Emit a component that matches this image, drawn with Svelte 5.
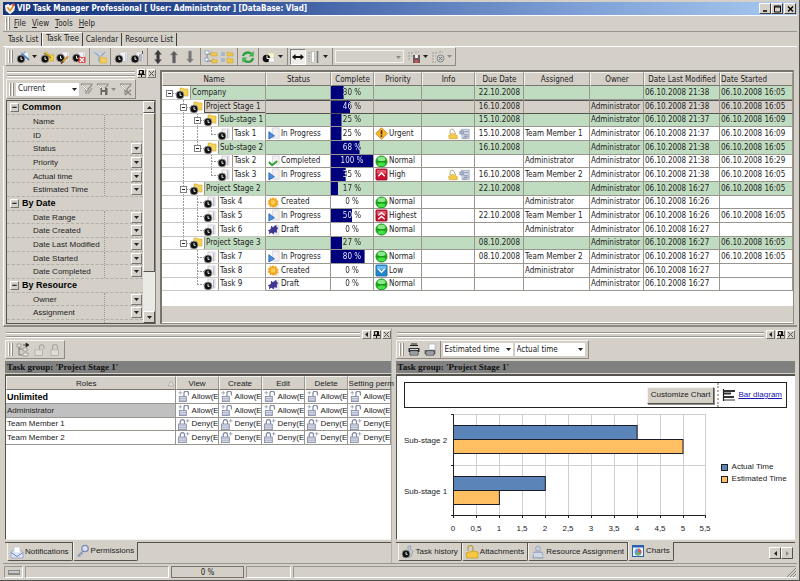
<script>
  let mainTab = $state('Task Tree')
  let leftTab = $state('Permissions')
  let rightTab = $state('Charts')

  const mainTabs = ['Task List', 'Task Tree', 'Calendar', 'Resource List']
  const menus = ['File', 'View', 'Tools', 'Help']

  const toolbar = [
    { icon: 'new', label: 'New task', drop: true },
    { icon: 'newgroup', label: 'New group' },
    { icon: 'edit', label: 'Edit task' },
    { icon: 'delete', label: 'Delete task' },
    null,
    { icon: 'filter', label: 'Filter' },
    null,
    { icon: 'clocksheet', label: 'Copy task' },
    { icon: 'clockpaste', label: 'Paste task' },
    null,
    { icon: 'updown', label: 'Move' },
    { icon: 'up', label: 'Move up' },
    { icon: 'down', label: 'Move down' },
    null,
    { icon: 'expand', label: 'Expand all' },
    { icon: 'groups', label: 'Collapse all' },
    null,
    { icon: 'refresh', label: 'Refresh' },
    null,
    { icon: 'clocknote', label: 'Reminder', drop: true },
    null,
    { icon: 'fit', label: 'Fit columns', pressed: true },
    { icon: 'columns', label: 'Columns', drop: true },
    null
  ]

  const filters = [
    { group: 'Common', items: ['Name', 'ID', 'Status', 'Priority', 'Actual time', 'Estimated Time'] },
    { group: 'By Date', items: ['Date Range', 'Date Created', 'Date Last Modified', 'Date Started', 'Date Completed'] },
    { group: 'By Resource', items: ['Owner', 'Assignment'] }
  ]
  const plain = ['Name', 'ID']

  const columns = ['Name', 'Status', 'Complete', 'Priority', 'Info', 'Due Date', 'Assigned', 'Owner', 'Date Last Modified', 'Date Started']

  const A = 'Administrator'
  // through: tree levels whose vertical line runs past the row
  const rows = [
    { name: 'Company', level: 0, group: true, through: [], done: 30, due: '22.10.2008', modified: '06.10.2008 21:38', started: '06.10.2008 16:05' },
    { name: 'Project Stage 1', level: 1, group: true, selected: true, through: [1], done: 46, due: '16.10.2008', owner: A, modified: '06.10.2008 21:38', started: '06.10.2008 16:05' },
    { name: 'Sub-stage 1', level: 2, group: true, through: [1, 2], done: 25, due: '15.10.2008', owner: A, modified: '06.10.2008 21:37', started: '06.10.2008 16:09' },
    { name: 'Task 1', level: 3, through: [1, 2], status: 'In Progress', done: 25, priority: 'Urgent', info: true, due: '15.10.2008', assigned: 'Team Member 1', owner: A, modified: '06.10.2008 21:37', started: '06.10.2008 16:09' },
    { name: 'Sub-stage 2', level: 2, group: true, through: [1], done: 68, due: '16.10.2008', owner: A, modified: '06.10.2008 21:38', started: '06.10.2008 16:05' },
    { name: 'Task 2', level: 3, through: [1, 3], status: 'Completed', done: 100, priority: 'Normal', assigned: A, owner: A, modified: '06.10.2008 21:38', started: '06.10.2008 16:29' },
    { name: 'Task 3', level: 3, through: [1], status: 'In Progress', done: 35, priority: 'High', info: true, due: '16.10.2008', assigned: 'Team Member 2', owner: A, modified: '06.10.2008 21:38', started: '06.10.2008 16:05' },
    { name: 'Project Stage 2', level: 1, group: true, through: [1], done: 17, due: '22.10.2008', owner: A, modified: '06.10.2008 16:27', started: '06.10.2008 16:05' },
    { name: 'Task 4', level: 2, through: [1, 2], status: 'Created', done: 0, priority: 'Normal', assigned: A, owner: A, modified: '06.10.2008 16:26' },
    { name: 'Task 5', level: 2, through: [1, 2], status: 'In Progress', done: 50, priority: 'Highest', due: '22.10.2008', assigned: 'Team Member 1', owner: A, modified: '06.10.2008 16:26', started: '06.10.2008 16:05' },
    { name: 'Task 6', level: 2, through: [1], status: 'Draft', done: 0, priority: 'Normal', assigned: A, owner: A, modified: '06.10.2008 16:27' },
    { name: 'Project Stage 3', level: 1, group: true, through: [], done: 27, due: '08.10.2008', owner: A, modified: '06.10.2008 16:27', started: '06.10.2008 16:05' },
    { name: 'Task 7', level: 2, through: [2], status: 'In Progress', done: 80, priority: 'Normal', due: '08.10.2008', assigned: 'Team Member 2', owner: A, modified: '06.10.2008 16:27', started: '06.10.2008 16:05' },
    { name: 'Task 8', level: 2, through: [2], status: 'Created', done: 0, priority: 'Low', assigned: A, owner: A, modified: '06.10.2008 16:27' },
    { name: 'Task 9', level: 2, through: [], status: 'Draft', done: 0, priority: 'Normal', owner: A, modified: '06.10.2008 16:27' }
  ]

  const rights = ['View', 'Create', 'Edit', 'Delete', 'Setting perm']
  const roles = [
    { name: 'Unlimited', allow: true, bold: true },
    { name: 'Administrator', allow: true, active: true },
    { name: 'Team Member 1', allow: false },
    { name: 'Team Member 2', allow: false }
  ]

  const ticks = ['0', '0,5', '1', '1,5', '2', '2,5', '3', '3,5', '4', '4,5', '5', '5,5']
  const tickX = (i) => 56 + Math.round(i * 22.95)
  const series = [
    { label: 'Sub-stage 2', actual: 4, estimated: 5 },
    { label: 'Sub-stage 1', actual: 2, estimated: 1 }
  ]
</script>

{#snippet clock(x, y)}
  <circle cx={x} cy={y} r="4" fill="#111" stroke="#a5a5a5" stroke-width="0.8" />
  <path d="M{x} {y - 2.2}V{y + 0.4}H{x + 1.6}" stroke="#fff" stroke-width="0.9" fill="none" />
{/snippet}

{#snippet sheet()}
  <rect x="6" y="2" width="7.5" height="9.5" fill="#f2f2f4" stroke="#c2c2c8" stroke-width="0.7" />
  <path d="M11.5 3v8M13 4v7" stroke="#b9bcc6" stroke-width="0.7" />
{/snippet}

{#snippet icon(name)}
  <svg class="icon" viewBox="0 0 14 14" width="14" height="14" fill="none" aria-hidden="true">
    {#if name === 'new'}
      <rect x="6" y="3" width="6" height="7" fill="#f5f5f5" />
      {@render clock(5, 9)}
      <path d="M5.5 3.5L13 10" stroke="#4f81bd" stroke-width="1.8" /><path d="M5 3h3M9 1l-1 3" stroke="#8bb0dd" />
    {:else if name === 'newgroup'}
      <path d="M6 4h3l1 1h4v6H6z" fill="#f1cd4a" stroke="#c39b25" stroke-width="0.6" />
      {@render clock(5, 9)}
      <path d="M4 3l7 5" stroke="#9c7f20" stroke-width="1.5" /><path d="M5 2l3 1" stroke="#dfb93c" />
    {:else if name === 'edit'}
      {@render sheet()}{@render clock(4.5, 8)}
      <path d="M6 12.5l6-6" stroke="#d3902f" stroke-width="2.2" /><path d="M5 13.5l2-2" stroke="#513412" stroke-width="1.5" />
    {:else if name === 'delete'}
      {@render sheet()}{@render clock(4.5, 8)}
      <rect x="6.5" y="7" width="7" height="6" fill="#e04848" /><path d="M8 8l4 4M12 8l-4 4" stroke="#fff" stroke-width="1.2" />
    {:else if name === 'filter'}
      <path d="M1 2l5 4v6M12 2L8 6" stroke="#8ea9cf" stroke-width="1.4" /><path d="M1 2h10" stroke="#b9cce6" />
      <path d="M7 7h2l1 1h4v5H7z" fill="#f3cf57" stroke="#cda42d" stroke-width="0.6" />
    {:else if name === 'clocksheet'}
      {@render sheet()}{@render clock(5, 9)}
    {:else if name === 'clockpaste'}
      {@render sheet()}{@render clock(5, 9)}
      <rect x="9" y="4" width="3" height="7" fill="#b4b4b8" /><path d="M12.5 1v3" stroke="#555" />
    {:else if name === 'updown'}
      <path d="M7 0l3.500 4.500h-2v5h2L7 14 3.500 9.500h2v-5h-2z" fill="#383838" stroke="#777" stroke-width="0.5" />
    {:else if name === 'up'}
      <path d="M7 1l3.500 4h-2v8h-3V5h-2z" fill="#5c5c5c" stroke="#888" stroke-width="0.5" />
    {:else if name === 'down'}
      <path d="M7 13l3.500-4h-2V1h-3v8h-2z" fill="#777" stroke="#999" stroke-width="0.5" />
    {:else if name === 'expand'}
      <path d="M3 2v10M3 4h5M3 11h5" stroke="#777" stroke-width="0.8" />
      <rect x="1" y="1" width="4" height="3" fill="#fff" stroke="#6f98c8" stroke-width="0.7" /><rect x="1" y="8" width="3" height="3" fill="#fff" stroke="#6f98c8" stroke-width="0.7" />
      <path d="M7 2h2l1 1h3v3H7zM8 9h2l1 1h2v3H8z" fill="#efc84b" stroke="#c49d2c" stroke-width="0.5" />
    {:else if name === 'groups'}
      <path d="M1 3h4M1 5h4M1 9h4M1 11h4" stroke="#7da0cc" />
      <path d="M7 2h2l1 1h3v3H7zM7 8h2l1 1h3v4H7z" fill="#efc84b" stroke="#c49d2c" stroke-width="0.5" />
    {:else if name === 'refresh'}
      <path d="M2 6a5 4.500 0 0 1 8.500-2M12 8a5 4.500 0 0 1-8.500 2.500" stroke="#2fa044" stroke-width="2.4" />
      <path d="M12.8 1v5.500H7.500zM1.200 13V7.500h5.300z" fill="#3cb552" />
    {:else if name === 'clocknote'}
      <rect x="6" y="3" width="6" height="7" fill="#fbf6d8" stroke="#d9d2a0" stroke-width="0.6" />
      <circle cx="4.5" cy="8.5" r="3.8" fill="#111" /><path d="M5 5.500v3h2" stroke="#fff" />
      <rect x="7" y="8" width="5" height="4" fill="#fff" stroke="#bbb" stroke-width="0.5" />
    {:else if name === 'fit'}
      <path d="M1 7l3.500-3v2h5V4L13 7l-3.500 3V8h-5v2z" fill="#111" />
    {:else if name === 'columns'}
      <path d="M2 2v10" stroke="#8b97ad" stroke-dasharray="2 1" /><rect x="4.5" y="1.5" width="3" height="11" fill="#fff" stroke="#9aa" stroke-width="0.6" /><path d="M10.5 1v12" stroke="#777" stroke-width="1.5" />
    {:else if name === 'viewsave'}
      <path d="M1 3h5M1 6h4M1 9h3M8 2h4" stroke="#999" stroke-dasharray="2 1" /><path d="M6 5h7v8H6z" fill="#6d5a5a" /><path d="M8 5h3v3H8z" fill="#eee" /><path d="M8 10h3v3H8z" fill="#c55" />
    {:else if name === 'viewdel'}
      <path d="M1 3h5M1 6h4M1 9h3M8 2h4M1 12h4" stroke="#999" stroke-dasharray="2 1" /><circle cx="9.5" cy="8.5" r="3.5" stroke="#888" fill="#c9c9c9" /><path d="M8 7l3 3M11 7l-3 3" stroke="#777" />
    {:else if name === 'fclear' || name === 'fsave' || name === 'fdel'}
      <path d="M1 2h12M1 2l5 5v5M12 3L8 7v3" stroke="#8e8c88" stroke-width="1.2" /><path d="M2 3l5 5" stroke="#fff" />
      {#if name === 'fsave'}<path d="M4.5 6h7v7h-7z" fill="#6b6964" /><path d="M6 6h3v2H6zM6 10h3v3H6z" fill="#d8d5ce" />{/if}
      {#if name === 'fdel'}<path d="M6 8l6 5M12 8l-6 5" stroke="#8b8984" stroke-width="1.6" />{/if}
      {#if name === 'fclear'}<path d="M8 12l4-6" stroke="#a9a7a2" stroke-width="2" />{/if}
    {:else if name === 'tree'}
      <path d="M3 3v9h3M3 6h3" stroke="#777" /><path d="M1 1h4v3H1zM7 5h4v3H7zM7 10h5v3H7z" fill="#e8e6e0" stroke="#8a8880" stroke-width="0.7" /><path d="M7 2h5M10 0l3 2-3 2z" stroke="#222" fill="#222" stroke-width="0.7" />
    {:else if name === 'unlock' || name === 'lock'}
      <path d={name === 'lock' ? 'M4.5 7V4a2.500 2.500 0 0 1 5 0v3' : 'M7.5 7V4a2 2 0 0 1 4.500 0v2'} stroke="#a9a7a2" stroke-width="1.2" />
      <rect x="3" y="7" width="7.5" height="5.5" fill="#efeeea" stroke="#aaa8a2" stroke-width="0.8" /><path d="M3 9h7M3 11h7" stroke="#bbb" stroke-width="0.7" />
    {:else if name === 'allow'}
      <path d="M7.5 7V3.500a2.400 2.400 0 0 1 4.800 0V6" stroke="#8188a0" stroke-width="1.3" />
      <rect x="2.5" y="7" width="7.5" height="5.5" fill="#e4e8f2" stroke="#7f87a0" stroke-width="0.9" /><path d="M3 9h7M3 11h7" stroke="#929ab4" stroke-width="0.8" /><path d="M3.5 1v4M1.500 3h4" stroke="#8e93a5" stroke-width="0.8" />
    {:else if name === 'deny'}
      <path d="M3.5 6.500V4a2.300 2.300 0 0 1 4.600 0v2.500" stroke="#8188a0" stroke-width="1.3" />
      <rect x="1.5" y="6.5" width="8.5" height="6" fill="#e4e8f2" stroke="#7f87a0" stroke-width="0.9" /><path d="M2 8.500h8M2 10.500h8" stroke="#929ab4" stroke-width="0.8" /><path d="M11.5 1v4M9.500 3h4" stroke="#8e93a5" stroke-width="0.8" />
    {:else if name === 'print' || name === 'preview'}
      {#if name === 'print'}<path d="M3 2.500h8M4 1h6" stroke="#222" stroke-width="1.2" />{:else}<path d="M6 1h6v6H6z" fill="#fff" stroke="#aab" stroke-width="0.6" />{/if}
      <path d="M1.5 5h11v4h-11z" fill={name === 'print' ? '#333' : '#777'} transform={name === 'print' ? null : 'translate(0 2)'} />
      <path d="M3 8h8v4H3z" fill="#dfe5ee" stroke="#333" stroke-width="0.9" /><path d="M3 6.500h8" stroke="#cfd5df" /><path d="M4 10h6" stroke="#555" />
    {:else if name === 'In Progress'}
      <path d="M6 1h7v11H6z" fill="#f1f1f4" stroke="#c9c9d0" stroke-width="0.7" /><path d="M2 5l6 4.500-6 3.500z" fill="#4b8fe0" stroke="#1d5cb0" stroke-width="0.8" />
    {:else if name === 'Completed'}
      <path d="M6 1h7v9H6z" fill="#f1f1f4" stroke="#c9c9d0" stroke-width="0.7" /><path d="M2 7.500l3.500 3.500L11 6.500" stroke="#35a035" stroke-width="2.2" />
    {:else if name === 'Created'}
      <path d="M7 5h6v8H7z" fill="#eee" /><path d="M6.5 1l1.300 2L10 2l.3 2.500 2.200.8-1.300 2 1.300 2-2.300.7-.2 2.400-2.200-1L6.500 13l-1.300-1.800-2.300.8-.1-2.400L.6 9l1.300-2L.6 5l2.300-.6L3 2l2.300 1z" fill="#f4a51e" /><circle cx="6.5" cy="7" r="2.6" fill="#ffcf56" />
    {:else if name === 'Draft'}
      <path d="M7 3h6v10H7z" fill="#ececf2" stroke="#ccc" stroke-width="0.5" /><path d="M4.5 3l2 1.500L10 2l.5 2.500 1.500.5-1.500 3 .5 2.500-3-.5-1 2-2.500-1.500L2 12.500l.5-3L1 8l3-1.500z" fill="#3f3792" />
    {:else if name === 'Urgent'}
      <path d="M7 .8L13.200 7 7 13.200.8 7z" fill="#f8b630" stroke="#cf8314" /><path d="M7 3.500v4.500M7 9v1.800" stroke="#4a2a05" stroke-width="1.7" />
    {:else if name === 'Normal'}
      <circle cx="7" cy="7" r="6" fill="#22b422" stroke="#138013" stroke-width="0.8" /><ellipse cx="7" cy="4.2" rx="4.2" ry="2.4" fill="#8be88b" /><path d="M2 7.300h10" stroke="#168c16" /><ellipse cx="7" cy="10" rx="4" ry="2" fill="#47e247" />
    {:else if name === 'High' || name === 'Highest'}
      <rect x="1" y="1" width="12" height="12" rx="1" fill="#c8102e" stroke="#8d0a1e" stroke-width="0.8" /><path d="M2 2h10v4H2z" fill="#e0566a" />
      <path d={name === 'High' ? 'M3.5 9L7 5.500 10.500 9' : 'M3.5 7L7 4l3.500 3M3.500 11L7 8l3.500 3'} stroke="#fff" stroke-width="1.5" />
    {:else if name === 'Low'}
      <rect x="1" y="1" width="12" height="12" rx="1" fill="#2386cc" stroke="#14619b" stroke-width="0.8" /><path d="M2 2h10v4H2z" fill="#6cbdf0" /><path d="M3.5 5.500L7 9l3.500-3.500" stroke="#fff" stroke-width="1.5" />
    {:else if name === 'bell'}
      <path d="M4 7V4a2.500 2.500 0 0 1 5-1l2 4" stroke="#a89f8a" stroke-width="1.2" /><path d="M2 9l5-3 6 3v4H3z" fill="#f3c948" stroke="#c79b24" stroke-width="0.7" />
    {:else if name === 'note'}
      <path d="M3 1h10v12H4z" fill="#d5dbe8" stroke="#7d879d" stroke-width="0.7" /><path d="M1 3h5v4H1z" fill="#a9b6d0" stroke="#66728e" stroke-width="0.6" /><path d="M7 4h5M6 8h6M6 10h6M5 12h5" stroke="#75819d" />
    {:else if name === 'Notifications'}
      <path d="M1 7l6-4 6 4v6H1z" fill="#dfe7f7" stroke="#8b9cc4" stroke-width="0.8" /><path d="M4 2h6v6H4z" fill="#fff" stroke="#b9c3da" stroke-width="0.6" /><path d="M1 7.500l6 4 6-4" stroke="#6f86bd" />
    {:else if name === 'Permissions'}
      <circle cx="9" cy="4.5" r="3.2" fill="#d9e1f1" stroke="#7b8db4" stroke-width="1.3" /><path d="M7 7l-5.500 5.500M3 11l1.500 1.500M5 9l1.500 1.500" stroke="#8597bd" stroke-width="1.5" />
    {:else if name === 'Task history'}
      <path d="M7 1h3l-1 3 3 2-2 6H7z" fill="#c4cbd8" stroke="#828da3" stroke-width="0.6" />{@render clock(5, 9)}
    {:else if name === 'Attachments'}
      <path d="M3 6V3a2 2 0 0 1 5 0v5" stroke="#b89b3d" stroke-width="1.2" /><path d="M1 8l7-2 5 1v6H2z" fill="#f5c842" stroke="#c39520" stroke-width="0.7" />
    {:else if name === 'Resource Assignment'}
      <circle cx="7" cy="3.5" r="2.5" fill="#c5cde0" stroke="#8b97b5" stroke-width="0.7" /><path d="M3 7h8l1 6H2z" fill="#b3bfd8" stroke="#7e8cae" stroke-width="0.7" /><path d="M2 9h9M3 11h9" stroke="#edf1fa" />
    {:else if name === 'Charts'}
      <rect x="1.5" y="1.5" width="11" height="11" fill="#f3f7ff" stroke="#2b5fae" /><path d="M1 2.500h12" stroke="#2b5fae" stroke-width="2" /><circle cx="7" cy="8" r="3.5" fill="#5c9bd8" /><path d="M7 8V4.500A3.500 3.500 0 0 1 10 9.500z" fill="#df5a49" /><path d="M7 8l3 1.800a3.500 3.500 0 0 1-5.500.7z" fill="#6bb759" />
    {:else if name === 'bars'}
      <path d="M1.5 1v12" stroke="#222" stroke-width="1.2" /><path d="M2 3h11M2 5.500h7M2 9h10" stroke="#333" stroke-width="1.8" /><path d="M2 12h11" stroke="#333" />
    {/if}
  </svg>
{/snippet}

{#snippet arrow(dir)}
  <svg class="arrow" viewBox="0 0 7 7" width="7" height="7" aria-hidden="true">
    <path d={{ down: 'M1 2h5L3.500 5z', up: 'M1 5h5L3.500 2z', left: 'M5 1v5L2 3.500z', right: 'M2 1v5l3-2.500z' }[dir]} fill="currentColor" />
  </svg>
{/snippet}

{#snippet dockHead(hide)}
  <div class="dock-head">
    <span class="dock-grip"></span>
    {#if hide}<button class="mini" aria-label="Collapse panel">{@render arrow('left')}</button>{/if}
    <button class="mini" aria-label="Pin panel"><svg viewBox="0 0 7 7" width="7" height="7"><path d="M1.500 .500h4v3.500h-4zM0 4.500h7M3.500 4.500V7M4.500 .500v4" stroke="#111" fill="none" /></svg></button>
    <button class="mini" aria-label="Close panel"><svg viewBox="0 0 7 7" width="7" height="7"><path d="M1 1l5 5M6 1L1 6" stroke="#555" /></svg></button>
  </div>
{/snippet}

{#snippet tree(row)}
  {@const x = 7 + 14 * row.level}
  <svg class="tree" width={28 + 14 * row.level} height="14" fill="none" aria-hidden="true">
    {#each row.through as k}
      <path d="M{7.5 + 14 * k} 0v14" stroke="#999" stroke-dasharray="2 1" />
    {/each}
    {#if row.level > 0}<path d="M{x + 0.5} 0v7" stroke="#999" stroke-dasharray="2 1" />{/if}
    <path d="M{x} 7.500h7" stroke="#999" stroke-dasharray="2 1" />
    {#if row.group}
      <rect x={x - 2.5} y="4.5" width="6" height="6" fill="#fff" stroke="#808080" /><path d="M{x - 1} 7.500h3" stroke="#222" />
      <path d="M{x + 11} 2h3l1 1h4v7h-8z" fill="#f3d254" stroke="#d0a930" stroke-width="0.6" />
    {:else}
      <rect x={x + 11} y="2" width="7" height="9" fill="#f2f2f4" stroke="#c5c5cb" stroke-width="0.7" /><path d="M{x + 16.5} 3v8" stroke="#b9bcc6" />
    {/if}
    {@render clock(x + 11, 9)}
  </svg>
{/snippet}

<div class="window">
  <header class="titlebar">
    <svg class="logo" viewBox="0 0 14 14" width="12" height="12" aria-hidden="true">
      <path d="M1 3l4-2 2 2 3-2 3 3-1 5-5 4-5-4z" fill="#f6f1e8" /><path d="M4 5l3 4 5-7" stroke="#e08a2c" stroke-width="1.8" fill="none" /><circle cx="11" cy="2" r="1.5" fill="#d9473a" />
    </svg>
    <h1>VIP Task Manager Professional [ User: Administrator ] [DataBase: Vlad]</h1>
    <div class="winbtns">
      <button aria-label="Minimize"><svg viewBox="0 0 9 8" width="9" height="8"><path d="M2 6h4" stroke="#000" stroke-width="1.5" /></svg></button>
      <button aria-label="Maximize"><svg viewBox="0 0 9 8" width="9" height="8"><path d="M1.5 1h6v6h-6zM1 2h7" stroke="#000" fill="none" /></svg></button>
      <button aria-label="Close"><svg viewBox="0 0 9 8" width="9" height="8"><path d="M2 1.500l5 5M7 1.500l-5 5" stroke="#000" stroke-width="1.4" /></svg></button>
    </div>
  </header>

  <nav class="menubar">
    <span class="grip"></span>
    {#each menus as m}
      <button><u>{m[0]}</u>{m.slice(1)}</button>
    {/each}
  </nav>

  <div class="maintabs" role="tablist">
    {#each mainTabs as t}
      <button role="tab" aria-selected={mainTab === t} class:active={mainTab === t} onclick={() => (mainTab = t)}>{t}</button>
    {/each}
  </div>

  <div class="toolstrip">
    <div class="toolbar">
      <span class="grip"></span>
      {#each toolbar as b}
        {#if b}
          <button class="tool" class:pressed={b.pressed} aria-label={b.label}>{@render icon(b.icon)}</button>
          {#if b.drop}<button class="drop" aria-label="{b.label} options">{@render arrow('down')}</button>{/if}
        {:else}
          <span class="sep"></span>
        {/if}
      {/each}
      <span class="combo disabled views"><select disabled aria-label="View"><option></option></select>{@render arrow('down')}</span>
      <button class="tool" aria-label="Save view">{@render icon('viewsave')}</button>
      <button class="drop" aria-label="Save view options">{@render arrow('down')}</button>
      <button class="tool" aria-label="Delete view">{@render icon('viewdel')}</button>
      <button class="drop dim" aria-label="Delete view options">{@render arrow('down')}</button>
    </div>
  </div>

  <section class="work">
    <aside class="filter">
      {@render dockHead(false)}
      <div class="toolbar filterbar">
        <span class="grip"></span>
        <span class="combo current"><select aria-label="Filter preset"><option>Current</option></select>{@render arrow('down')}</span>
        <button class="tool" aria-label="Clear filter">{@render icon('fclear')}</button>
        <button class="tool" aria-label="Save filter">{@render icon('fsave')}</button>
        <button class="drop dim" aria-label="Save filter options">{@render arrow('down')}</button>
        <button class="tool" aria-label="Delete filter">{@render icon('fdel')}</button>
      </div>
      <div class="filterbox">
        <div class="filterlist">
          {#each filters as f}
            <div class="frow fgroup"><button class="fold" aria-label="Collapse {f.group}">−</button>{f.group}</div>
            {#each f.items as item}
              <div class="frow">
                <span class="fname">{item}</span>
                <span class="fvalue">
                  {#if !plain.includes(item)}<button class="mini" aria-label="Choose {item}">{@render arrow('down')}</button>{/if}
                </span>
              </div>
            {/each}
          {/each}
          <div class="frow"><span class="fname"></span><span class="fvalue"></span></div>
        </div>
        <div class="scroll">
          <button class="sbtn" aria-label="Scroll up">{@render arrow('up')}</button>
          <div class="thumb"></div>
          <div class="track"></div>
          <button class="sbtn" aria-label="Scroll down">{@render arrow('down')}</button>
        </div>
      </div>
    </aside>

    <div class="gridbox">
      <table class="tasks">
        <colgroup>
          {#each columns as c, i}<col class="c{i}" />{/each}
        </colgroup>
        <thead>
          <tr>{#each columns as c, i}<th class:left={i === 9}>{c}</th>{/each}</tr>
        </thead>
        <tbody>
          {#each rows as r}
            <tr class:group={r.group} class:selected={r.selected}>
              <td class="name"><div class="cell">{@render tree(r)}<span class="label">{r.name}</span></div></td>
              <td>{#if r.status}<div class="cell">{@render icon(r.status)}{r.status}</div>{/if}</td>
              <td class="done" style:--done="{r.done}%"><span class="pct">{r.done} %</span></td>
              <td>{#if r.priority}<div class="cell">{@render icon(r.priority)}{r.priority}</div>{/if}</td>
              <td>{#if r.info}<div class="cell info">{@render icon('bell')}{@render icon('note')}</div>{/if}</td>
              <td class="due">{r.due ?? ''}</td>
              <td>{r.assigned ?? ''}</td>
              <td>{r.owner ?? ''}</td>
              <td>{r.modified}</td>
              <td>{r.started ?? ''}</td>
            </tr>
          {/each}
        </tbody>
      </table>
      <div class="gridfoot"></div>
    </div>
  </section>

  <section class="bottom">
    <div class="pane left-pane">
      {@render dockHead(true)}
      <div class="toolbar">
        <span class="grip"></span>
        <button class="tool" aria-label="Inherit">{@render icon('tree')}</button>
        <button class="tool" aria-label="Allow">{@render icon('unlock')}</button>
        <button class="tool" aria-label="Deny">{@render icon('lock')}</button>
      </div>
      <h2>Task group: 'Project Stage 1'</h2>
      <div class="body">
        <table class="roles">
          <colgroup><col />{#each rights as r}<col class="right" />{/each}</colgroup>
          <thead>
            <tr>
              <th><div class="cell"><span class="mid">Roles</span><svg viewBox="0 0 8 7" width="8" height="7" aria-hidden="true"><path d="M1 6l3-5 3 5z" fill="#ddd" stroke="#aaa" stroke-width="0.8" /></svg></div></th>
              {#each rights as r}<th>{r}</th>{/each}
            </tr>
          </thead>
          <tbody>
            {#each roles as r}
              <tr>
                <td class:bold={r.bold} class:active={r.active}>{r.name}</td>
                {#each rights as _}
                  <td><div class="cell perm">{@render icon(r.allow ? 'allow' : 'deny')}<span>{r.allow ? 'Allow(E' : 'Deny(E'}</span></div></td>
                {/each}
              </tr>
            {/each}
          </tbody>
        </table>
      </div>
      <div class="tabs" role="tablist">
        {#each ['Notifications', 'Permissions'] as t}
          <button role="tab" aria-selected={leftTab === t} class:active={leftTab === t} onclick={() => (leftTab = t)}>{@render icon(t)}{t}</button>
        {/each}
      </div>
    </div>

    <div class="pane right-pane">
      {@render dockHead(true)}
      <div class="toolbar">
        <span class="grip"></span>
        <button class="tool" aria-label="Print">{@render icon('print')}</button>
        <button class="tool" aria-label="Preview">{@render icon('preview')}</button>
        <span class="sep"></span>
        <span class="combo time"><select aria-label="First series"><option>Estimated time</option><option>Actual time</option></select>{@render arrow('down')}</span>
        <span class="combo time"><select aria-label="Second series"><option>Actual time</option><option>Estimated time</option></select>{@render arrow('down')}</span>
      </div>
      <h2>Task group: 'Project Stage 1'</h2>
      <div class="body">
        <div class="charthead">
          <button class="customize">Customize Chart</button>
          <a href="#bar">{@render icon('bars')}<span>Bar diagram</span></a>
        </div>
        <div class="chartrow">
          <svg class="chart" viewBox="0 0 320 126" width="320" height="126" role="img" aria-label="Actual and estimated time by stage">
            {#each ticks as t, i}
              {#if i > 0}<path d="M{tickX(i) + 0.5} 6v102" stroke="#cfcfcf" />{/if}
              <path d="M{tickX(i) + 0.5} 107v3" stroke="#222" />
              <text x={tickX(i)} y="123" text-anchor="middle">{t}</text>
            {/each}
            <path d="M56 6.500h253M56 57.500h253" stroke="#cfcfcf" />
            {#each series as s, i}
              <rect x="56.5" y={17.5 + 51 * i} width={s.actual * 45.9} height="14" fill="#5b84b8" stroke="#1c1c28" />
              <rect x="56.5" y={31.5 + 51 * i} width={s.estimated * 45.9} height="14" fill="#ffc063" stroke="#1c1c28" />
              <text x="7" y={35 + 51 * i}>{s.label}</text>
            {/each}
            <path d="M56.5 6v102M54 107.500h255M54 6.500h3M54 57.500h3" stroke="#222" fill="none" />
          </svg>
          <ul class="legend">
            <li><i class="actual"></i>Actual Time</li>
            <li><i class="estimated"></i>Estimated Time</li>
          </ul>
        </div>
      </div>
      <div class="tabs" role="tablist">
        {#each ['Task history', 'Attachments', 'Resource Assignment', 'Charts'] as t}
          <button role="tab" aria-selected={rightTab === t} class:active={rightTab === t} onclick={() => (rightTab = t)}>{@render icon(t)}{t}</button>
        {/each}
        <div class="tabscroll">
          <button class="sbtn" aria-label="Previous tabs">{@render arrow('left')}</button>
          <button class="sbtn dim" aria-label="Next tabs">{@render arrow('right')}</button>
        </div>
      </div>
    </div>
  </section>

  <footer class="status">
    <span class="s0"><svg viewBox="0 0 12 8" width="12" height="8" aria-hidden="true"><path d="M0 2h12v5H0z" fill="#8b8b8b" /><path d="M1 3h10v2H1z" fill="#c9c9c9" /></svg></span>
    <span class="s1"></span>
    <span class="s2">0 %</span>
    <span class="s3"></span>
    <span class="s4"><svg viewBox="0 0 10 10" width="10" height="10" aria-hidden="true"><path d="M1 10l9-9M4 10l6-6M7 10l3-3" stroke="#8a8780" /></svg></span>
  </footer>
</div>

<style>
  :global(body) { margin: 0; background: #d4d0c8; }
  .window :global(*) { box-sizing: border-box; }
  .window { box-sizing: border-box; min-height: 100vh; display: flex; flex-direction: column; padding: 2px 2px 0 3px; border-right: 1px solid #55534e; border-bottom: 1px solid #55534e; background: #d4d0c8; color: #222; font: 8px/12px "DejaVu Sans Condensed", Tahoma, sans-serif; }
  button, select { font: inherit; color: inherit; margin: 0; padding: 0; border: none; border-radius: 0; background: none; }
  svg { display: block; flex: none; }

  .titlebar { display: flex; align-items: center; gap: 1px; height: 13px; padding: 0 1px; background: linear-gradient(90deg, #15347a, #2a4b93 25%, #7a9cd3 70%, #a6caf0); color: #fff; }
  .titlebar h1 { flex: 1; margin: 0; font: bold 8px/12px "DejaVu Sans Condensed", Tahoma, sans-serif; white-space: nowrap; overflow: hidden; }
  .winbtns { display: flex; }
  .winbtns button { width: 12px; height: 11px; display: flex; align-items: center; justify-content: center; background: #d4d0c8; border: 1px solid; border-color: #fff #404040 #404040 #fff; }
  .winbtns button:last-child { margin-left: 1px; }

  .grip { width: 5px; height: 13px; flex: none; margin: 0 2px 0 1px; border-left: 1px solid #fff; border-right: 1px solid #8d8a83; background: linear-gradient(90deg, #9a978f 1px, transparent 1px 2px, #fff 2px); }
  .menubar { display: flex; align-items: center; height: 17px; gap: 6px; padding-left: 1px; border-top: 1px solid #fff; border-bottom: 1px solid #99968f; }
  .menubar .grip { margin-right: -2px; }

  .maintabs { display: flex; align-items: flex-end; height: 14px; padding-left: 2px; }
  .maintabs button { height: 13px; padding: 0 3px; border-right: 1px solid #404040; white-space: nowrap; }
  .maintabs button.active { height: 14px; border-left: 1px solid #fff; border-top: 1px solid #fff; padding-bottom: 2px; }
  .toolstrip { border-top: 1px solid #fff; padding: 0 2px; display: flex; }

  .toolbar { display: flex; align-items: center; align-self: flex-start; height: 19px; padding: 0 1px; border: 1px solid; border-color: #f4f3f0 #8d8a83 #8d8a83 #f4f3f0; }
  .tool { width: 16px; height: 16px; display: flex; align-items: center; justify-content: center; }
  .tool.pressed { background: #efede9; border: 1px solid; border-color: #808080 #fff #fff #808080; }
  .drop { width: 8px; height: 16px; display: flex; align-items: center; }
  .drop.dim, .sbtn.dim { color: #8d8a83; }
  .sep { width: 5px; height: 17px; flex: none; border-right: 2px solid transparent; border-left: 2px solid transparent; background: #8d8a83; background-clip: padding-box; }

  .combo { position: relative; display: flex; align-items: center; height: 13px; background: #fff; }
  .combo select { appearance: none; width: 100%; height: 13px; padding: 0 10px 0 2px; line-height: 12px; }
  .combo .arrow, .combo :global(.arrow) { position: absolute; right: 1px; top: 3px; pointer-events: none; }
  .combo.disabled { background: #d4d0c8; border: 1px solid #f4f3f0; color: #8d8a83; }
  .views { width: 69px; margin-right: 2px; }
  .current { width: 64px; }
  .time { width: 70px; margin-right: 2px; }

  .mini { width: 9px; height: 9px; flex: none; display: flex; align-items: center; justify-content: center; background: #d4d0c8; border: 1px solid; border-color: #fff #77746d #77746d #fff; }
  .dock-head { display: flex; align-items: center; gap: 1px; height: 12px; }
  .dock-grip { flex: 1; height: 5px; border-top: 1px solid #99968f; border-bottom: 1px solid #99968f; margin: 0 1px; box-shadow: inset 0 1px #fff, 0 1px #fff; }

  .work { display: flex; border-bottom: 2px solid #8d8a83; border-left: 1px solid #fff; padding-bottom: 1px; }
  .filter { width: 156px; flex: none; display: flex; flex-direction: column; padding: 1px 4px 0 2px; }
  .filterbar { height: 20px; width: 130px; margin-bottom: 1px; }
  .filterbox { display: flex; height: 224px; border: 1px solid #55534e; border-right-color: #8d8a83; }
  .filterlist { flex: 1; overflow: hidden; font-family: "Liberation Sans", Arial, sans-serif; }
  .frow { display: flex; height: 14px; line-height: 13px; border-bottom: 1px dashed #b2afa7; }
  .frow:nth-child(3n) { height: 13px; }
  .fgroup { font-weight: bold; font-size: 9px; color: #000; align-items: center; gap: 3px; padding-left: 3px; }
  .fold { width: 9px; height: 9px; display: flex; align-items: center; justify-content: center; line-height: 7px; border: 1px solid; border-color: #fff #77746d #77746d #fff; }
  .fname { width: 98px; flex: none; padding-left: 26px; white-space: nowrap; border-right: 1px dotted #99968f; }
  .fvalue { flex: 1; display: flex; align-items: center; justify-content: flex-end; padding-right: 1px; }
  .fvalue .mini { width: 11px; height: 11px; }
  .scroll { width: 12px; display: flex; flex-direction: column; }
  .sbtn { width: 12px; height: 12px; flex: none; display: flex; align-items: center; justify-content: center; background: #d4d0c8; border: 1px solid; border-color: #fff #55534e #55534e #fff; }
  .thumb { flex: 4; border: 1px solid; border-color: #fff #55534e #55534e #fff; }
  .track { flex: 1; background: #ebe9e5; }

  .gridbox { flex: 1; min-width: 0; display: flex; flex-direction: column; margin: 4px 3px 0 0; background: #fff; border: 1px solid #8d8a83; border-top: 2px solid #77746d; border-left: 2px solid #77746d; }
  .gridfoot { margin-top: auto; height: 17px; background: #d4d0c8; border-bottom: 1px solid #fff; }

  table { width: 100%; table-layout: fixed; border-collapse: separate; border-spacing: 0; }
  th { height: 13px; padding: 0; font-weight: normal; background: #d4d0c8; border: 1px solid; border-color: #f4f3f0 #99968f #77746d #f4f3f0; line-height: 11px; white-space: nowrap; }
  .tasks th { height: 14px; }
  th.left { text-align: left; }
  td { height: 14px; padding: 0 0 0 1px; line-height: 12px; white-space: nowrap; overflow: hidden; border-right: 1px solid #99968f; border-bottom: 1px solid #99968f; background: #fff; }
  tr:nth-child(3n) td { height: 13px; }
  .cell { display: flex; align-items: center; height: 12px; gap: 1px; }
  .c0 { width: 104px; } .c1 { width: 65px; } .c2 { width: 43px; } .c3 { width: 48px; } .c4 { width: 53px; }
  .c5 { width: 49px; } .c6 { width: 66px; } .c7 { width: 54px; } .c8 { width: 76px; }
  .tasks tbody tr.group td { background: #c0dcc0; }
  .tasks tbody tr.selected td { background: #d4d0c8; box-shadow: inset 0 1px #55534e; border-bottom-color: #55534e; }
  .tasks tbody tr td.name { padding: 0; background: #fff; box-shadow: none; border-bottom-color: #c9c7c1; }
  .name .cell { height: 13px; gap: 0; }
  .name .label { flex: 1; height: 13px; line-height: 13px; padding-left: 1px; border-left: 1px solid #99968f; }
  tr:nth-child(3n) .name .cell, tr:nth-child(3n) .label { height: 12px; line-height: 12px; }
  .group .label { background: #c0dcc0; }
  .selected .label { background: #d4d0c8; border: 1px solid #55534e; border-right: none; line-height: 11px; }
  .tree { height: 14px; }
  .cell :global(.icon) { width: 13px; height: 13px; }
  .cell.info { justify-content: flex-end; padding-right: 4px; }
  .cell.info :global(.icon) { width: 11px; height: 12px; }
  .tasks td.due { text-align: right; padding-right: 3px; }
  .tasks tbody tr td.done { padding: 0; background-image: linear-gradient(#00007c, #00007c); background-repeat: no-repeat; background-size: var(--done) 100%; background-origin: padding-box; background-clip: padding-box; }
  .pct { display: block; text-align: center; color: transparent; background: linear-gradient(90deg, #fff var(--done), #222 var(--done)); background-clip: text; }

  .bottom { flex: 1; display: flex; gap: 2px; padding-top: 1px; }
  .pane { display: flex; flex-direction: column; min-width: 0; padding-left: 2px; }
  .left-pane { flex: 389 1 0; border-right: 1px solid #b2afa7; }
  .right-pane { flex: 403 1 0; padding-right: 2px; }
  .pane h2 { margin: 2px 0 1px; height: 12px; padding-left: 2px; font: bold 9px/12px "Liberation Serif", "Times New Roman", serif; background: #808080; color: #111; }
  .body { flex: 1; background: #fff; border-top: 2px solid #55534e; border-left: 1px solid #55534e; border-bottom: 1px solid #f4f3f0; font-family: "Liberation Sans", Arial, sans-serif; }
  .right { width: 43px; }
  .roles tr:nth-child(3n) .cell { height: 12px; }
  .mid { flex: 1; text-align: center; }
  td.bold { font-weight: bold; font-size: 9px; color: #000; }
  td.active { background: #c0c0c0; }
  .perm { gap: 2px; overflow: hidden; }

  .charthead { display: flex; align-items: center; justify-content: flex-end; height: 26px; margin: 6px 8px 0 7px; border: 1px solid #222; }
  .customize { height: 17px; padding: 0 3px; margin-right: 3px; background: #d4d0c8; border: 1px solid; border-color: #f4f3f0 #55534e #55534e #f4f3f0; box-shadow: 1px 1px #8d8a83; }
  .charthead a { display: flex; align-items: center; gap: 2px; height: 24px; padding: 0 4px 0 3px; border-left: 2px dotted #b2afa7; color: #1414b4; text-decoration: none; }
  .charthead a span { text-decoration: underline; }
  .chartrow { display: flex; align-items: center; }
  .chart text { font-size: 8px; fill: #222; }
  .legend { list-style: none; margin: 0; padding: 4px 0 0 4px; white-space: nowrap; }
  .legend li { display: flex; align-items: center; gap: 4px; }
  .legend i { width: 7px; height: 7px; border: 1px solid #222; }
  .legend .actual { background: #5b84b8; }
  .legend .estimated { background: #ffc063; }

  .tabs { display: flex; height: 21px; padding: 0 2px; margin-top: 2px; border-top: 1px solid #55534e; font-family: "Liberation Sans", Arial, sans-serif; }
  .tabs > button { display: flex; align-items: center; gap: 1px; height: 18px; padding: 0 3px 0 2px; border: 1px solid #55534e; border-top: none; border-left-color: #f4f3f0; border-radius: 0 0 2px 2px; white-space: nowrap; }
  .tabs > button.active { margin-top: -1px; height: 19px; background: #d4d0c8; }
  .tabscroll { margin-left: auto; display: flex; align-items: center; }

  .status { display: flex; gap: 2px; height: 17px; padding: 2px 1px; border-top: 1px solid #99968f; }
  .status span { height: 12px; line-height: 11px; border: 1px solid; border-color: #99968f #fff #fff #99968f; display: flex; align-items: center; justify-content: center; }
  .status .s0 { width: 19px; } .status .s1 { width: 144px; } .status .s2 { width: 73px; border-color: #77746d; } .status .s3 { width: 45px; }
  .status .s4 { flex: 1; justify-content: flex-end; border-right: none; }
</style>
